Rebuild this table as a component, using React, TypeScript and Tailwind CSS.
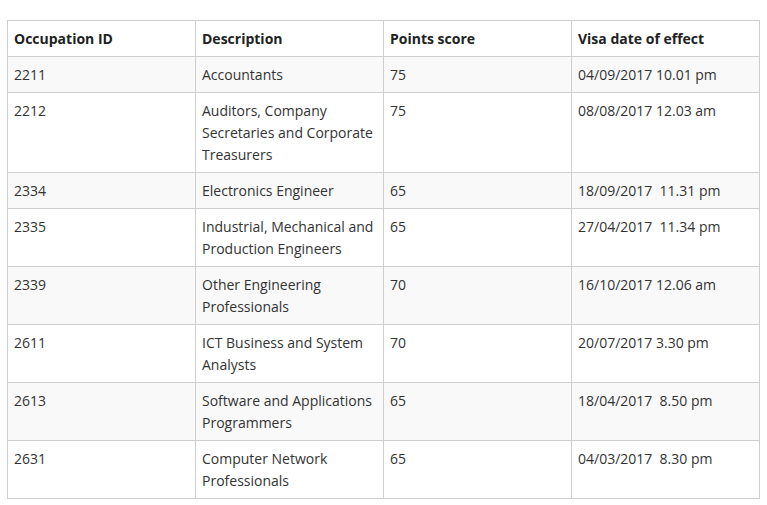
import React from "react";

const rows: [string, string, string, string][] = [
  ["2211", "Accountants", "75", "04/09/2017 10.01 pm"],
  ["2212", "Auditors, Company Secretaries and Corporate Treasurers", "75", "08/08/2017 12.03 am"],
  ["2334", "Electronics Engineer", "65", "18/09/2017\u00a0 11.31 pm"],
  ["2335", "Industrial, Mechanical and Production Engineers", "65", "27/04/2017\u00a0 11.34 pm"],
  ["2339", "Other Engineering Professionals", "70", "16/10/2017 12.06 am"],
  ["2611", "ICT Business and System Analysts", "70", "20/07/2017 3.30 pm"],
  ["2613", "Software and Applications Programmers", "65", "18/04/2017\u00a0 8.50 pm"],
  ["2631", "Computer Network Professionals", "65", "04/03/2017\u00a0 8.30 pm"],
];

const headers = ["Occupation ID", "Description", "Points score", "Visa date of effect"];

export default function App() {
  return (
    <div className="w-[767px] h-[505px] bg-white pt-[20px] pl-[7px]" style={{ fontFamily: '"Open Sans", sans-serif' }}>
      <table className="table-fixed border-collapse w-[752px] text-[14px] leading-[22px] text-[#333]">
        <colgroup>
          <col className="w-[188px]" />
          <col className="w-[188px]" />
          <col className="w-[188px]" />
          <col className="w-[188px]" />
        </colgroup>
        <thead>
          <tr>
            {headers.map((h) => (
              <th key={h} className="border border-[#cfcfcf] text-left align-top font-bold pl-[6px] pr-[6px] pt-[7px] pb-[6px] text-[#222]">
                {h}
              </th>
            ))}
          </tr>
        </thead>
        <tbody>
          {rows.map((r, i) => (
            <tr key={r[0]} className={i % 2 === 0 ? "bg-[#f9f9f9]" : "bg-white"}>
              {r.map((c, j) => (
                <td key={j} className="border border-[#cfcfcf] align-top pl-[6px] pr-[6px] pt-[7px] pb-[6px]">
                  {c}
                </td>
              ))}
            </tr>
          ))}
        </tbody>
      </table>
    </div>
  );
}
